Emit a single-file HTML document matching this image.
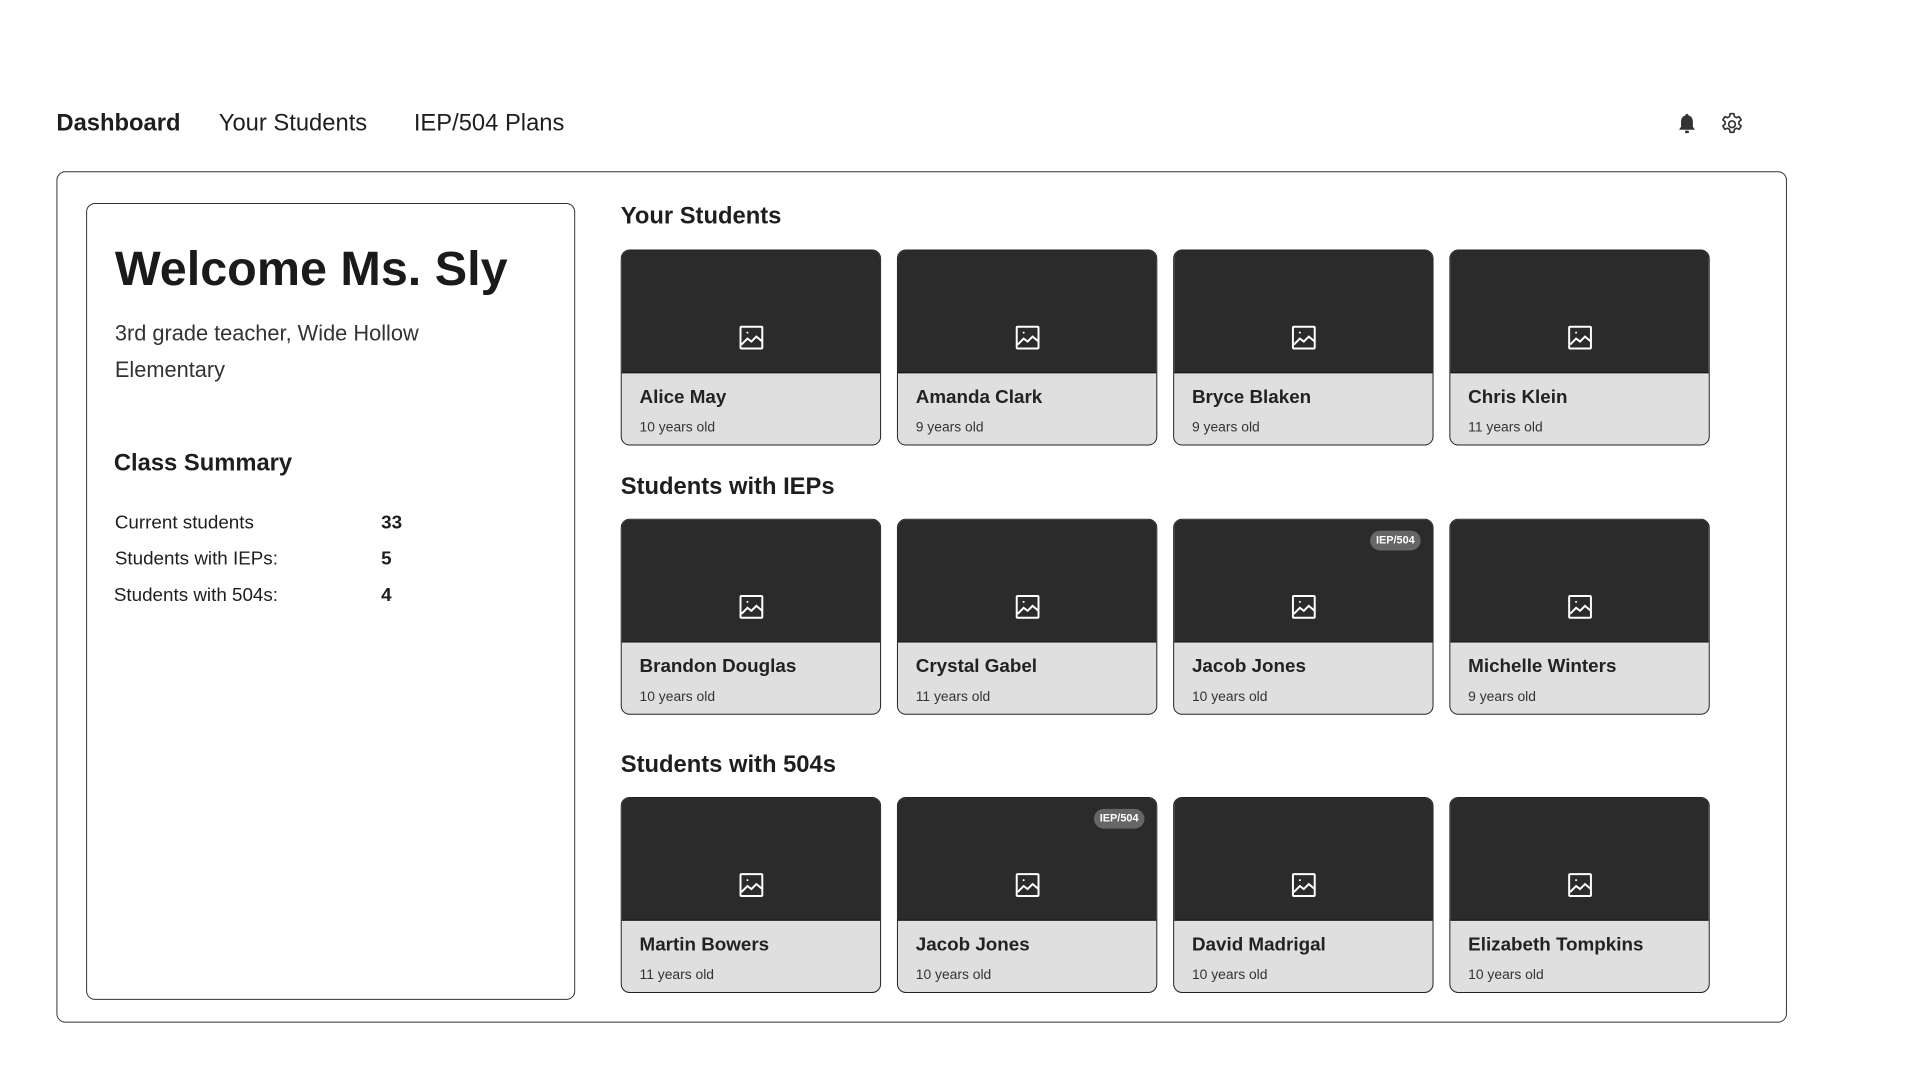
<!DOCTYPE html>
<html><head><meta charset="utf-8"><style>
*{box-sizing:border-box;margin:0;padding:0}
body{width:1920px;height:1080px;background:#fff;font-family:"Liberation Sans",sans-serif;color:#1e1e1e;position:relative;overflow:hidden}
#w{position:absolute;left:0;top:0;width:1940px;height:1090px;transform:scale(0.99);transform-origin:0 0}
.a{position:absolute;white-space:nowrap}
.nav{font-size:24px;top:111px}
.outer{position:absolute;left:57px;top:173px;width:1748px;height:860px;border:1.5px solid #333;border-radius:9px}
.left{position:absolute;left:87px;top:205px;width:494px;height:805px;border:1.5px solid #333;border-radius:9px}
.h{font-size:24px;font-weight:bold}
.card{position:absolute;width:263px;height:198px;border:1.5px solid #222;border-radius:9px;overflow:hidden;background:#dfdfdf}
.card .top{height:124px;background:#2b2b2b;border-bottom:1.5px solid #111;position:relative}
.card svg{position:absolute;left:118px;top:75px}
.card .n{position:absolute;left:18px;top:138px;font-size:19px;font-weight:bold;color:#222}
.card .y{position:absolute;left:18px;top:170px;font-size:14px;color:#333}
.badge{position:absolute;right:12px;top:11px;background:#666;color:#fff;font-size:11px;font-weight:bold;padding:4px 6px;border-radius:11px}
.row{font-size:19px}
</style></head><body><div id="w">
<div class="a nav" style="left:57px;font-weight:bold">Dashboard</div>
<div class="a nav" style="left:221px">Your Students</div>
<div class="a nav" style="left:418px">IEP/504 Plans</div>
<svg class="a" style="left:1694px;top:114px" width="20" height="22" viewBox="0 0 20 22"><path d="M10 1c1 0 1.5.7 1.5 1.5 3 .8 4.5 3.3 4.5 6.5v5l2 3H2l2-3V9c0-3.2 1.5-5.7 4.5-6.5C8.5 1.7 9 1 10 1z" fill="#333"/><rect x="8" y="18" width="4" height="2.5" rx="1" fill="#333"/></svg>
<svg class="a" style="left:1736px;top:112px" width="27" height="27" viewBox="0 0 24 24" fill="none" stroke="#333" stroke-width="1.5"><path d="M10.3 2.5h3.4l.5 2.6 1.8 1 2.5-.9 1.7 2.9-2 1.7v2.1l2 1.7-1.7 2.9-2.5-.9-1.8 1-.5 2.6h-3.4l-.5-2.6-1.8-1-2.5.9-1.7-2.9 2-1.7v-2.1l-2-1.7 1.7-2.9 2.5.9 1.8-1z" stroke-linejoin="round"/><circle cx="12" cy="12" r="3"/></svg>
<div class="outer"></div>
<div class="left"></div>
<div class="a" style="left:116px;top:244px;font-size:49px;font-weight:bold;color:#1a1a1a">Welcome Ms. Sly</div>
<div class="a" style="left:116px;top:318px;font-size:22px;line-height:37px;color:#333">3rd grade teacher, Wide Hollow<br>Elementary</div>
<div class="a" style="left:115px;top:454px;font-size:24px;font-weight:bold">Class Summary</div>
<div class="a row" style="left:116px;top:518px">Current students</div><div class="a row" style="left:385px;top:518px;font-weight:bold">33</div>
<div class="a row" style="left:116px;top:554px">Students with IEPs:</div><div class="a row" style="left:385px;top:554px;font-weight:bold">5</div>
<div class="a row" style="left:115px;top:591px">Students with 504s:</div><div class="a row" style="left:385px;top:591px;font-weight:bold">4</div>
<div class="a h" style="left:627px;top:205px">Your Students</div>
<div class="a h" style="left:627px;top:478px">Students with IEPs</div>
<div class="a h" style="left:627px;top:759px">Students with 504s</div>
<div id="cards"></div>
</div>
<script>
var I='<svg width="26" height="26" viewBox="0 0 26 26" fill="none" stroke="#fff" stroke-width="2"><rect x="2" y="2" width="22" height="22" rx="1"/><path d="M3 20l6-6 4 3 5-5 6 5"/><circle cx="9" cy="8" r="1" fill="#fff" stroke="none"/></svg>';
var rows=[[252,[["Alice May","10"],["Amanda Clark","9"],["Bryce Blaken","9"],["Chris Klein","11"]]],
[524,[["Brandon Douglas","10"],["Crystal Gabel","11"],["Jacob Jones","10",1],["Michelle Winters","9"]]],
[805,[["Martin Bowers","11"],["Jacob Jones","10",1],["David Madrigal","10"],["Elizabeth Tompkins","10"]]]];
var xs=[627,906,1185,1464],h='';
rows.forEach(function(r){r[1].forEach(function(c,i){h+='<div class="card" style="left:'+xs[i]+'px;top:'+r[0]+'px"><div class="top">'+I+(c[2]?'<span class="badge">IEP/504</span>':'')+'</div><div class="n">'+c[0]+'</div><div class="y">'+c[1]+' years old</div></div>';});});
document.getElementById('cards').innerHTML=h;
</script>
</body></html>
